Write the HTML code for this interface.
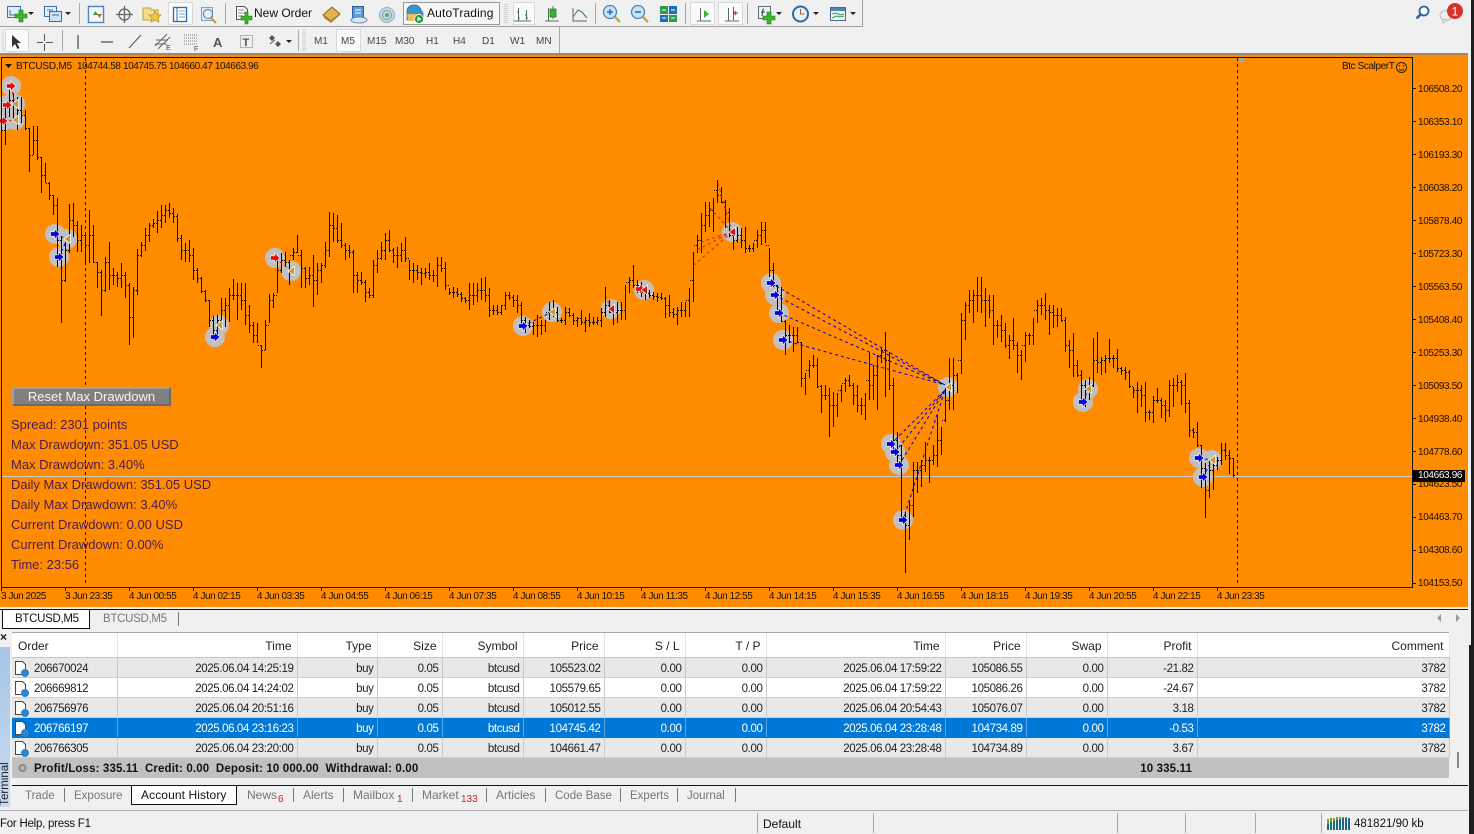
<!DOCTYPE html>
<html><head><meta charset="utf-8"><title>MetaTrader</title>
<style>
html,body{margin:0;padding:0;width:1474px;height:834px;overflow:hidden;background:#f0f0f0;font-family:"Liberation Sans",sans-serif;color:#111}
.a{position:absolute}
.t{position:absolute;white-space:nowrap;line-height:14px}
#tb{position:absolute;left:12px;top:633px;width:1437px;border-collapse:collapse;table-layout:fixed;font-size:11.5px;color:#222}
#tb td,#tb th{height:17px;padding:2px 3px 0 0;text-align:right;font-weight:normal;border-right:1px solid #c9c9c9;border-bottom:1px solid #cfcfcf;white-space:nowrap;overflow:hidden;letter-spacing:-.38px}
#tb th{height:23px;padding-top:1px;background:#fff;border-right:1px solid #e6e6e6;border-bottom:1px solid #c4c4c4;font-size:12px;padding-right:5px;letter-spacing:0}
#tb tr.g td{background:#e8e8e8}
#tb tr.w td{background:#fff}
#tb tr.s td{background:#0078d7;color:#fff;border-right:1px solid #5aa5e4;border-bottom:1px solid #0078d7}
#tb tr.u td{background:#c0c0c0;border:0;font-weight:bold;color:#111;height:18px;letter-spacing:.14px}
.L{text-align:left!important}
.tab{position:absolute;top:788px;font-size:11.5px;color:#777;line-height:14px;white-space:nowrap}
.dv{position:absolute;top:788px;width:1px;height:14px;background:#777}
.sd{position:absolute;top:813px;width:1px;height:20px;background:#a8a8a8}
.m{position:absolute;top:36px;font-size:10px;line-height:12px;color:#444;white-space:nowrap}
.sep{position:absolute;width:1px;background:#a8a8a8}
.act{position:absolute;background:#fafafa;border:1px solid #d8d8d8;box-sizing:border-box}
.p{position:absolute;left:1418px;font-size:10px;line-height:12px;color:#1a0f00;letter-spacing:-.35px}
.d{position:absolute;top:591px;font-size:10px;line-height:12px;color:#1a0f00;white-space:nowrap;letter-spacing:-.45px}
.i{position:absolute;left:11px;font-size:13px;line-height:16px;color:#4a1c50;white-space:nowrap}
</style></head><body>

<!-- toolbar row lines -->
<div class="a" style="left:0;top:26px;width:862px;height:1px;background:#a0a0a0"></div>
<div class="a" style="left:862px;top:0;width:1px;height:27px;background:#a0a0a0"></div>
<div class="a" style="left:559px;top:27px;width:1px;height:26px;background:#a8a8a8"></div>
<div class="a" style="left:0;top:53px;width:1468px;height:2px;background:#a08a64"></div>

<div class="act" style="left:168px;top:2px;width:25px;height:23px"></div>
<div class="act" style="left:513px;top:2px;width:22px;height:23px"></div>
<div class="act" style="left:690px;top:2px;width:25px;height:23px"></div>
<div class="act" style="left:718px;top:2px;width:25px;height:23px"></div>
<div class="act" style="left:403px;top:2px;width:97px;height:23px;border-color:#999;background:#f6f6f6"></div>
<div class="act" style="left:5px;top:29px;width:24px;height:23px"></div>
<div class="act" style="left:336px;top:29px;width:25px;height:23px"></div>
<div class="sep" style="left:79px;top:3px;height:21px"></div>
<div class="sep" style="left:225px;top:3px;height:21px"></div>
<div class="sep" style="left:595px;top:3px;height:21px"></div>
<div class="sep" style="left:685px;top:3px;height:21px"></div>
<div class="sep" style="left:747px;top:3px;height:21px"></div>
<div class="sep" style="left:62px;top:30px;height:21px"></div>
<div class="sep" style="left:298px;top:30px;height:21px"></div>

<svg class="a" style="left:0;top:0" width="900" height="54" viewBox="0 0 900 54">
<defs><path id="ar" d="M0 0h6l-3 3z" fill="#222"/></defs>
<!-- grips -->
<path d="M505 4v20M507 4v20M303 30v21M305 30v21M3 30v21" stroke="#b5b5b5" stroke-dasharray="1 1"/>
<!-- new chart -->
<rect x="7.500" y="6.500" width="13" height="11" fill="#dfeefa" stroke="#3d6f9e"/>
<path d="M10 10v5h5" stroke="#3d6f9e" fill="none"/>
<path d="M15 14h4v-4h4v4h4v4h-4v4h-4v-4h-4z" fill="#3cb52b" stroke="#1d7a14" stroke-width=".6"/>
<use href="#ar" x="28" y="12"/>
<!-- profiles -->
<rect x="44.500" y="6.500" width="12" height="10" fill="#e6f0fa" stroke="#3d6f9e"/>
<rect x="49.500" y="11.500" width="12" height="10" fill="#cfe2f5" stroke="#3d6f9e"/>
<path d="M47 10h6M52 15h7" stroke="#3d6f9e"/>
<use href="#ar" x="65" y="12"/>
<!-- market watch -->
<rect x="88.500" y="6.500" width="15" height="16" fill="#f4f8fc" stroke="#4a86b8" stroke-width="1.400"/>
<path d="M93 15l2.500-4 2.500 4z" fill="#2da52a"/><path d="M97 14l2.500 4 2.500-4z" fill="#d2552a"/>
<!-- crosshair -->
<circle cx="124.500" cy="14.500" r="5.500" fill="none" stroke="#666" stroke-width="1.300"/>
<path d="M124.500 6v17M116 14.500h17" stroke="#666" stroke-width="1.300"/>
<!-- folder star -->
<path d="M143 8h7l2 2h6v10h-15z" fill="#f7dc8e" stroke="#c49a3a"/>
<path d="M155 11l2 4h4l-3 3 1 4-4-2-4 2 1-4-3-3h4z" fill="#f5c838" stroke="#b58a20" stroke-width=".7"/>
<!-- navigator -->
<rect x="173.500" y="7.500" width="13" height="14" fill="#fff" stroke="#2a6aa8" stroke-width="1.300"/>
<path d="M177 8v13" stroke="#2a6aa8"/><path d="M179 11h6M179 14h6M179 17h6" stroke="#7aa8d0"/>
<!-- terminal search -->
<rect x="201.500" y="7.500" width="11" height="13" fill="#dfe8f0" stroke="#8aa0b4"/>
<circle cx="208" cy="14" r="4.500" fill="#e8f0f8" stroke="#5b7a96"/>
<path d="M211 18l5 5" stroke="#c49a3a" stroke-width="2"/>
<!-- new order -->
<path d="M236.500 6.500h8l3 3v10h-11z" fill="#fff" stroke="#555"/>
<path d="M238 10h6M238 13h7M238 16h5" stroke="#888"/>
<path d="M241 16h4v-4h3v4h4v4h-4v4h-3v-4h-4z" fill="#3cb52b" stroke="#1d7a14" stroke-width=".6"/>
<!-- gold book -->
<path d="M323 15l9-8 8 7-9 7z" fill="#e0b44e" stroke="#8a6320"/><path d="M323 15l1 3 7 5 9-8v-1l-9 7z" fill="#b8853a"/>
<!-- people cloud -->
<rect x="352.500" y="6.500" width="11" height="11" fill="#5b9bd8" stroke="#2a5e96"/>
<path d="M355 10h6M355 13h6" stroke="#fff"/>
<ellipse cx="359" cy="20" rx="8" ry="3" fill="#dbe8f3" stroke="#6a8eb0"/>
<!-- signal -->
<circle cx="387" cy="15" r="7.500" fill="#c8d6e0" stroke="#9ab"/>
<circle cx="387" cy="15" r="4.500" fill="none" stroke="#6aa3c4"/>
<circle cx="387" cy="15" r="2" fill="#58ad56"/>
<!-- autotrading -->
<path d="M407 12a7 6 0 0 1 14-2l2 3v7h-16z" fill="#3d93c9" stroke="#1f6a9a" stroke-width=".7"/>
<path d="M407 14h14l-1 7h-12z" fill="#e8c35a"/>
<circle cx="419" cy="19" r="4.500" fill="#1e9c3c" stroke="#fff" stroke-width=".7"/>
<path d="M417.500 16.500l4 2.500-4 2.500z" fill="#fff"/>
<!-- chart types -->
<path d="M514 21h17" stroke="#5a6a5a"/><path d="M518.500 8v13M517 12h1M519 18h1M526.500 10v10M525 15h1M527 18h1" stroke="#3a7a5a" stroke-width="1.100" fill="none"/>
<path d="M545 21h14M548.500 8v13M553 6v13" stroke="#5a6a5a"/><rect x="550" y="9" width="6" height="8" fill="#37b23a" stroke="#1d7a14" stroke-width=".7"/>
<path d="M573 8v13h14" stroke="#5a6a5a" fill="none"/><path d="M573 17l5-7 4 2 5 6" stroke="#3a7a5a" fill="none"/>
<!-- zoom -->
<circle cx="610" cy="12" r="6.500" fill="#c9e4f7" stroke="#4a86b8" stroke-width="1.300"/><path d="M607 12h6M610 9v6" stroke="#2a6aa8" stroke-width="1.500"/><path d="M615 17l5 5" stroke="#c9a43e" stroke-width="2.400"/>
<circle cx="638" cy="12" r="6.500" fill="#c9e4f7" stroke="#4a86b8" stroke-width="1.300"/><path d="M635 12h6" stroke="#2a6aa8" stroke-width="1.500"/><path d="M643 17l5 5" stroke="#c9a43e" stroke-width="2.400"/>
<!-- tile -->
<rect x="660" y="6" width="8" height="8" fill="#2d9b47"/><rect x="669" y="6" width="8" height="8" fill="#1f6fb5"/><rect x="660" y="15" width="8" height="7" fill="#1f6fb5"/><rect x="669" y="15" width="8" height="7" fill="#2d9b47"/>
<path d="M662 10h4M671 10h4M662 18h4M671 18h4" stroke="#fff"/>
<!-- shift / autoscroll -->
<path d="M697 21h14M700.500 8v13" stroke="#5a6a5a"/><path d="M704 10l5 4-5 4z" fill="#37b23a"/>
<path d="M725 21h14M728.500 8v13M733.500 7v13" stroke="#5a6a5a"/><path d="M735 13h3M736 11l-2 2 2 2" stroke="#c03020" fill="none"/>
<!-- indicators -->
<rect x="758.500" y="6.500" width="12" height="12" fill="#eef3f8" stroke="#5a6a7a"/><path d="M764 9c-2 0-1 3-2 7M761 12h4" stroke="#333" fill="none"/>
<path d="M763 16h4v-4h4v4h4v4h-4v4h-4v-4h-4z" fill="#3cb52b" stroke="#1d7a14" stroke-width=".6"/>
<use href="#ar" x="776" y="12"/>
<!-- clock -->
<circle cx="800.500" cy="14" r="7.500" fill="#e8f0f8" stroke="#2a6aa8" stroke-width="2"/><path d="M800.500 9v5h4" stroke="#a06030" fill="none"/>
<use href="#ar" x="813" y="12"/>
<!-- templates -->
<rect x="830.500" y="7.500" width="15" height="13" fill="#eef3f8" stroke="#4a6a8a"/><rect x="831" y="8" width="14" height="3" fill="#4a86b8"/>
<path d="M832 14l4-1 4 2 4-1M832 18l4-2 4 1 4-1" stroke="#3a9a4a" fill="none"/>
<use href="#ar" x="850" y="12"/>
<!-- row 2 -->
<path d="M12 35l0 12 3-3 2.500 5 2-1-2.500-5h4z" fill="#333"/>
<path d="M44.500 34v7M44.500 44v7M37 42.500h6M46 42.500h7" stroke="#555"/>
<path d="M78 35v14" stroke="#555" stroke-width="1.300"/>
<path d="M101 42h12" stroke="#555" stroke-width="1.300"/>
<path d="M129 48l12-13" stroke="#666" stroke-width="1.200"/>
<path d="M155 46l12-12M158 49l12-12M156 40h12M155 44h12" stroke="#666"/><text x="166" y="50" font-size="7" font-family="Liberation Sans" fill="#444">E</text>
<path d="M184 35h14M184 38h14M184 41h14M184 44h14" stroke="#777" stroke-dasharray="1 1"/><text x="194" y="51" font-size="7" font-family="Liberation Sans" fill="#444">F</text>
<text x="213" y="47" font-size="13" font-weight="bold" font-family="Liberation Sans" fill="#555">A</text>
<rect x="240.500" y="35.500" width="12" height="12" fill="none" stroke="#777" stroke-dasharray="1 1"/><text x="242.500" y="46" font-size="11" font-weight="bold" font-family="Liberation Sans" fill="#555">T</text>
<path d="M269 38l3-3 3 3-3 3zM275 44l3-3 3 3-3 3z" fill="#555"/><path d="M270 44l5-4" stroke="#555"/>
<use href="#ar" x="286" y="40"/>
</svg>
<div class="t" style="left:254px;top:6px;font-size:12px;color:#111">New Order</div>
<div class="t" style="left:427px;top:6px;font-size:12px;color:#111;letter-spacing:.15px">AutoTrading</div>
<div class="m" style="left:314px">M1</div><div class="m" style="left:341px">M5</div><div class="m" style="left:367px">M15</div><div class="m" style="left:395px">M30</div><div class="m" style="left:426px">H1</div><div class="m" style="left:453px">H4</div><div class="m" style="left:482px">D1</div><div class="m" style="left:510px">W1</div><div class="m" style="left:536px">MN</div>

<!-- top right -->
<svg class="a" style="left:1410px;top:0" width="60" height="28" viewBox="0 0 60 28">
<circle cx="14" cy="11" r="4.500" fill="#fff" stroke="#2d62ad" stroke-width="1.800"/><path d="M10.500 14.500l-4 4" stroke="#2d62ad" stroke-width="2.600"/>
<ellipse cx="36" cy="15.500" rx="6" ry="5" fill="#eee" stroke="#bbb"/><path d="M32 19l1 4 4-3z" fill="#eee" stroke="#bbb"/>
<circle cx="45" cy="11" r="8" fill="#d5322c"/>
<text x="45" y="15.500" font-size="12" text-anchor="middle" font-family="Liberation Sans" fill="#fff">1</text>
</svg>

<!-- chart -->
<div class="a" style="left:0;top:55px;width:1468px;height:552px;background:#ff8c00"></div>
<svg class="a" style="left:0;top:55px" width="1468" height="552" viewBox="0 55 1468 552">
<g fill="#c0c0c0">
<circle cx="11" cy="86" r="10"/><circle cx="7" cy="105" r="10"/><circle cx="15" cy="104" r="10"/><circle cx="3" cy="121" r="10"/><circle cx="15" cy="120" r="10"/>
<circle cx="55" cy="234" r="10"/><circle cx="67" cy="239" r="10"/><circle cx="59" cy="257" r="10"/>
<circle cx="275" cy="258" r="10"/><circle cx="291" cy="271" r="10"/><circle cx="219" cy="325" r="10"/><circle cx="215" cy="337" r="10"/>
<circle cx="523" cy="326" r="10"/><circle cx="552" cy="312" r="10"/><circle cx="611" cy="309" r="10"/><circle cx="644" cy="290" r="10"/>
<circle cx="732" cy="232" r="10"/><circle cx="771" cy="283" r="10"/><circle cx="775" cy="295" r="10"/><circle cx="779" cy="313" r="10"/><circle cx="783" cy="340" r="10"/>
<circle cx="948" cy="387" r="10"/><circle cx="891" cy="444" r="10"/><circle cx="895" cy="452" r="10"/><circle cx="899" cy="465" r="10"/><circle cx="903" cy="520" r="10"/>
<circle cx="1088" cy="389" r="10"/><circle cx="1083" cy="402" r="10"/><circle cx="1199" cy="458" r="10"/><circle cx="1212" cy="460" r="10"/><circle cx="1203" cy="477" r="10"/>
</g>
<path d="M1 476.500H1412" stroke="#c8c8c8"/>
<path d="M85.500 58V586M1237.500 58V586" stroke="#1a1000" stroke-dasharray="3 3"/>
<g transform="translate(.5 0)" stroke="#000" fill="none" shape-rendering="crispEdges">
<path d="M1 105V162M5 103V145M9 90V117M13 93V120M17 97V130M21 97V123M25 110V130M29 128V172M33 126V155M37 126V160M41 157V193M45 163V183M49 182V200M53 195V215M57 198V267M61 237V323M65 242V282M69 204V253M73 203V237M77 221V252M81 225V252M85 235V263M89 210V263M93 225V263M97 262V288M101 270V316M105 257V292M109 242V290M113 268V285M117 272V287M121 263V288M125 272V298M129 283V345M133 287V338M137 249V295M141 242V257M145 228V251M149 223V242M153 219V228M157 211V233M161 205V228M165 205V223M169 203V218M173 208V223M177 214V242M181 235V260M185 243V262M189 240V262M193 248V280M197 268V283M201 277V293M205 290V302M209 300V327M213 316V340M217 315V335M221 298V327M225 298V327M229 288V322M233 279V300M237 283V320M241 283V310M245 283V325M249 305V333M253 322V343M257 323V343M261 345V368M265 320V350M269 294V323M273 293V308M277 260V293M281 253V273M285 252V267M289 260V285M293 248V260M297 235V253M301 250V288M305 267V288M309 267V285M313 255V307M317 263V295M321 263V283M325 242V268M329 212V257M333 213V242M337 215V243M341 223V248M345 243V260M349 245V258M353 250V293M357 272V293M361 272V285M365 280V302M369 288V298M373 260V298M377 250V273M381 242V260M385 233V260M389 230V252M393 248V263M397 247V268M401 243V262M405 237V262M409 260V280M413 263V283M417 265V280M421 268V285M425 268V278M429 263V280M433 270V282M437 257V287M441 257V272M445 262V290M449 288V295M453 287V298M457 288V297M461 292V302M465 297V303M469 283V310M473 283V305M477 283V302M481 278V300M485 277V302M489 288V317M493 305V315M497 305V315M501 305V315M505 292V310M509 292V300M513 295V307M517 295V313M521 302V325M525 317V333M529 320V328M533 322V335M537 315V337M541 320V335M545 320V332M549 302V320M553 300V317M557 307V322M561 318V323M565 307V325M569 308V317M573 313V325M577 317V327M581 310V325M585 317V332M589 313V327M593 317V325M597 317V325M601 308V327M605 287V317M609 300V313M613 310V325M617 302V323M621 302V320M625 285V320M629 277V293M633 265V288M637 280V293M641 282V297M645 287V300M649 290V298M653 292V300M657 293V302M661 293V300M665 297V318M669 295V317M673 308V318M677 307V325M681 302V317M685 302V317M689 288V317M693 252V302M697 235V253M701 213V253M705 202V232M709 202V227M713 198V232M717 180V203M721 187V203M725 200V228M729 208V237M733 233V250M737 227V243M741 228V248M745 227V253M749 245V252M753 243V252M757 230V248M761 222V245M765 222V243M769 248V277M773 263V287M777 285V310M781 287V322M785 320V355M789 325V343M793 327V352M797 327V343M801 342V387M805 373V395M809 360V378M813 355V368M817 358V388M821 385V413M825 385V400M829 388V437M833 392V427M837 393V417M841 385V402M845 378V392M849 375V387M853 383V405M857 385V412M861 398V415M865 393V420M869 352V400M873 365V400M877 355V410M881 348V363M885 332V397M889 352V390M893 378V450M897 432V463M901 445V520M905 513V573M909 500V540M913 462V517M917 462V493M921 460V487M925 442V472M929 457V483M933 445V465M937 415V467M941 427V455M945 387V422M949 358V410M953 358V410M957 373V393M961 313V374M965 302V340M969 290V313M973 290V323M977 277V312M981 277V313M985 288V327M989 295V318M993 295V345M997 320V338M1001 315V342M1005 323V348M1009 335V359M1013 318V350M1017 342V373M1021 350V380M1025 332V362M1029 333V345M1033 318V345M1037 300V323M1041 298V315M1045 293V320M1049 305V335M1053 305V328M1057 308V327M1061 308V322M1065 317V352M1069 340V368M1073 333V377M1077 360V377M1081 370V403M1085 380V407M1089 377V400M1093 338V387M1097 332V373M1101 357V375M1105 355V373M1109 339V363M1113 355V368M1117 349V372M1121 367V375M1125 367V380M1129 370V388M1133 387V398M1137 382V413M1141 385V407M1145 382V422M1149 410V420M1153 396V423M1157 388V403M1161 398V418M1165 400V422M1169 380V417M1173 378V407M1177 375V392M1181 380V405M1185 373V413M1189 400V437M1193 428V438M1197 422V447M1201 445V488M1205 463V518M1209 460V498M1213 458V490M1217 457V470M1221 443V465M1225 443V460M1229 450V474M1233 458V477"/>
</g>
<g transform="translate(0 .5)" stroke="#000" fill="none" stroke-dasharray="1 1" shape-rendering="crispEdges">
<path d="M2 130h3M6 105h3M10 100h3M14 105h3M18 110h3M22 115h3M26 128h3M30 155h3M34 140h3M38 157h3M42 175h3M46 183h3M50 195h3M54 205h3M58 240h3M62 280h3M66 250h3M70 220h3M74 225h3M78 240h3M82 235h3M86 245h3M90 235h3M94 262h3M98 272h3M102 290h3M106 262h3M110 275h3M114 275h3M118 278h3M122 275h3M126 285h3M130 317h3M134 290h3M138 255h3M142 245h3M146 235h3M150 225h3M154 223h3M158 220h3M162 215h3M166 210h3M170 213h3M174 216h3M178 238h3M182 250h3M186 250h3M190 255h3M194 270h3M198 278h3M202 291h3M206 300h3M210 320h3M214 330h3M218 320h3M222 310h3M226 305h3M230 295h3M234 295h3M238 295h3M242 300h3M246 315h3M250 325h3M254 335h3M258 345h3M262 350h3M266 325h3M270 300h3M274 295h3M278 270h3M282 260h3M286 262h3M290 255h3M294 252h3M298 255h3M302 268h3M306 278h3M310 275h3M314 280h3M318 270h3M322 265h3M326 250h3M330 225h3M334 228h3M338 240h3M342 245h3M346 250h3M350 252h3M354 275h3M358 280h3M362 282h3M366 292h3M370 295h3M374 265h3M378 258h3M382 250h3M386 240h3M390 250h3M394 255h3M398 255h3M402 250h3M406 258h3M410 270h3M414 270h3M418 272h3M422 273h3M426 272h3M430 275h3M434 275h3M438 265h3M442 268h3M446 285h3M450 292h3M454 292h3M458 294h3M462 298h3M466 300h3M470 295h3M474 295h3M478 290h3M482 290h3M486 295h3M490 310h3M494 310h3M498 312h3M502 305h3M506 295h3M510 297h3M514 300h3M518 305h3M522 320h3M526 325h3M530 326h3M534 325h3M538 325h3M542 325h3M546 312h3M550 310h3M554 312h3M558 320h3M562 320h3M566 312h3M570 315h3M574 320h3M578 318h3M582 322h3M586 320h3M590 322h3M594 322h3M598 320h3M602 312h3M606 305h3M610 312h3M614 312h3M618 310h3M622 310h3M626 282h3M630 280h3M634 285h3M638 285h3M642 292h3M646 293h3M650 295h3M654 296h3M658 297h3M662 298h3M666 305h3M670 312h3M674 314h3M678 310h3M682 310h3M686 300h3M690 280h3M694 245h3M698 240h3M702 225h3M706 215h3M710 210h3M714 190h3M718 195h3M722 202h3M726 212h3M730 235h3M734 240h3M738 235h3M742 240h3M746 248h3M750 248h3M754 240h3M758 235h3M762 230h3M766 245h3M770 270h3M774 285h3M778 295h3M782 321h3M786 335h3M790 335h3M794 335h3M798 342h3M802 378h3M806 370h3M810 365h3M814 365h3M818 386h3M822 395h3M826 395h3M830 405h3M834 405h3M838 390h3M842 383h3M846 380h3M850 385h3M854 395h3M858 405h3M862 405h3M866 380h3M870 385h3M874 375h3M878 355h3M882 350h3M886 360h3M890 385h3M894 440h3M898 455h3M902 515h3M906 525h3M910 505h3M914 470h3M918 470h3M922 465h3M926 460h3M930 460h3M934 455h3M938 440h3M942 420h3M946 400h3M950 385h3M954 375h3M958 360h3M962 320h3M966 305h3M970 300h3M974 295h3M978 295h3M982 300h3M986 300h3M990 310h3M994 325h3M998 325h3M1002 330h3M1006 345h3M1010 340h3M1014 345h3M1018 355h3M1022 345h3M1026 335h3M1030 335h3M1034 310h3M1038 305h3M1042 305h3M1046 310h3M1050 312h3M1054 315h3M1058 315h3M1062 320h3M1066 345h3M1070 350h3M1074 365h3M1078 375h3M1082 385h3M1086 390h3M1090 385h3M1094 360h3M1098 362h3M1102 360h3M1106 358h3M1110 358h3M1114 358h3M1118 368h3M1122 370h3M1126 372h3M1130 386h3M1134 390h3M1138 390h3M1142 395h3M1146 412h3M1150 412h3M1154 400h3M1158 400h3M1162 405h3M1166 410h3M1170 385h3M1174 385h3M1178 382h3M1182 385h3M1186 403h3M1190 430h3M1194 432h3M1198 445h3M1202 468h3M1206 490h3M1210 470h3M1214 465h3M1218 460h3M1222 450h3M1226 455h3M1230 458h3M1234 475h1"/>
</g>
<g fill="none" stroke="#0000c0" stroke-width="1" stroke-dasharray="3 3">
<path d="M771 283L945 385M775 295L945 385M779 313L945 385M783 340L945 385M891 444L945 390M895 452L945 390M899 465L945 390M903 520L945 390"/>
<path d="M55 234L67 239M59 257L67 239M1083 402L1088 389M1199 458L1212 460M1203 477L1212 460M523 326L552 312M215 337L219 325"/>
</g>
<g fill="none" stroke="#e01818" stroke-width="1" stroke-dasharray="3 3">
<path d="M732 232L693 266M732 232L697 250M732 232L701 242M732 232L710 208M732 232L717 180M11 86L15 104M7 105L15 104M3 121L15 120M275 258L291 271M611 309L606 297M640 289L644 290"/>
</g>
<defs>
<path id="bA" d="M-4.500-2.200h4v-2.800L5 0-.5 5V2.200h-4z" fill="#0000e0" stroke="#fff" stroke-width=".6"/>
<path id="rA" d="M-4.500-2.200h4v-2.800L5 0-.5 5V2.200h-4z" fill="#e01010" stroke="#fff" stroke-width=".6"/>
<path id="tT" d="M3.500-4.800V4.800L-3 0z" fill="#c89a40" stroke="#fff" stroke-width=".7"/>
<path id="rT" d="M3.500-4.800V4.800L-3 0z" fill="#d01818" stroke="#fff" stroke-width=".7"/>
</defs>
<use href="#rA" x="11" y="86"/><use href="#rA" x="7" y="105"/><use href="#tT" x="15" y="104"/><use href="#rA" x="3" y="121"/><use href="#tT" x="15" y="120"/>
<use href="#bA" x="55" y="234"/><use href="#tT" x="67" y="239"/><use href="#bA" x="59" y="257"/>
<use href="#rA" x="275" y="258"/><use href="#tT" x="291" y="271"/><use href="#tT" x="219" y="325"/><use href="#bA" x="215" y="337"/>
<use href="#bA" x="523" y="326"/><use href="#tT" x="552" y="312"/><use href="#rT" x="611" y="309"/><use href="#rA" x="640" y="289"/><use href="#rT" x="644" y="290"/>
<use href="#rT" x="732" y="232"/><use href="#bA" x="771" y="283"/><use href="#bA" x="775" y="295"/><use href="#bA" x="779" y="313"/><use href="#bA" x="783" y="340"/>
<use href="#tT" x="948" y="387"/><use href="#bA" x="891" y="444"/><use href="#bA" x="895" y="452"/><use href="#bA" x="899" y="465"/><use href="#bA" x="903" y="520"/>
<use href="#tT" x="1088" y="389"/><use href="#bA" x="1083" y="402"/><use href="#bA" x="1199" y="458"/><use href="#tT" x="1212" y="460"/><use href="#bA" x="1203" y="477"/>
<!-- frame -->
<path d="M1.500 57.500H1412.500V587.500H1.500Z" fill="none" stroke="#111"/>
<path d="M1413 88.500h3M1413 121.500h3M1413 154.500h3M1413 187.500h3M1413 220.500h3M1413 253.500h3M1413 286.500h3M1413 319.500h3M1413 352.500h3M1413 385.500h3M1413 418.500h3M1413 451.500h3M1413 484.500h3M1413 517.500h3M1413 550.500h3M1413 583.500h3" stroke="#111"/>
<path d="M1.500 588v3M65.500 588v3M129.500 588v3M193.500 588v3M257.500 588v3M321.500 588v3M385.500 588v3M449.500 588v3M513.500 588v3M577.500 588v3M641.500 588v3M705.500 588v3M769.500 588v3M833.500 588v3M897.500 588v3M961.500 588v3M1025.500 588v3M1089.500 588v3M1153.500 588v3M1217.500 588v3" stroke="#111"/>
<path d="M5 64h7l-3.500 4z" fill="#111"/>
<path d="M1238 58h7l-3.500 5z" fill="#9ab0c0"/>
<circle cx="1401.500" cy="67.500" r="5" fill="none" stroke="#222"/><circle cx="1399.500" cy="66" r=".7" fill="#222"/><circle cx="1403.500" cy="66" r=".7" fill="#222"/><path d="M1399 69c1 1.500 4 1.500 5 0" stroke="#222" fill="none"/>
</svg>

<div class="t" style="left:16px;top:60px;font-size:10px;color:#111;letter-spacing:-.2px">BTCUSD,M5</div>
<div class="t" style="left:77px;top:60px;font-size:10px;color:#111;letter-spacing:-.41px">104744.58 104745.75 104660.47 104663.96</div>
<div class="t" style="left:1342px;top:60px;font-size:10px;color:#111;letter-spacing:-.4px">Btc ScalperT</div>

<div class="p" style="top:84px">106508.20</div><div class="p" style="top:117px">106353.10</div><div class="p" style="top:150px">106193.30</div><div class="p" style="top:183px">106038.20</div><div class="p" style="top:216px">105878.40</div><div class="p" style="top:249px">105723.30</div><div class="p" style="top:282px">105563.50</div><div class="p" style="top:315px">105408.40</div><div class="p" style="top:348px">105253.30</div><div class="p" style="top:381px">105093.50</div><div class="p" style="top:414px">104938.40</div><div class="p" style="top:447px">104778.60</div><div class="p" style="top:479px">104623.50</div><div class="p" style="top:512px">104463.70</div><div class="p" style="top:545px">104308.60</div><div class="p" style="top:578px">104153.50</div>
<div class="a" style="left:1413px;top:470px;width:52px;height:12px;background:#000"></div>
<div class="p" style="top:470px;color:#fff">104663.96</div>

<div class="d" style="left:1px">3 Jun 2025</div><div class="d" style="left:65px">3 Jun 23:35</div><div class="d" style="left:129px">4 Jun 00:55</div><div class="d" style="left:193px">4 Jun 02:15</div><div class="d" style="left:257px">4 Jun 03:35</div><div class="d" style="left:321px">4 Jun 04:55</div><div class="d" style="left:385px">4 Jun 06:15</div><div class="d" style="left:449px">4 Jun 07:35</div><div class="d" style="left:513px">4 Jun 08:55</div><div class="d" style="left:577px">4 Jun 10:15</div><div class="d" style="left:641px">4 Jun 11:35</div><div class="d" style="left:705px">4 Jun 12:55</div><div class="d" style="left:769px">4 Jun 14:15</div><div class="d" style="left:833px">4 Jun 15:35</div><div class="d" style="left:897px">4 Jun 16:55</div><div class="d" style="left:961px">4 Jun 18:15</div><div class="d" style="left:1025px">4 Jun 19:35</div><div class="d" style="left:1089px">4 Jun 20:55</div><div class="d" style="left:1153px">4 Jun 22:15</div><div class="d" style="left:1217px">4 Jun 23:35</div>

<div class="a" style="left:12px;top:387px;width:159px;height:19px;box-sizing:border-box;background:#808080;border:2px solid;border-color:#a0a0a0 #6a6a6a #6a6a6a #a0a0a0;color:#f4f4f4;font-size:13px;line-height:15px;text-align:center">Reset Max Drawdown</div>
<div class="i" style="top:417px">Spread: 2301 points</div>
<div class="i" style="top:437px">Max Drawdown: 351.05 USD</div>
<div class="i" style="top:457px">Max Drawdown: 3.40%</div>
<div class="i" style="top:477px">Daily Max Drawdown: 351.05 USD</div>
<div class="i" style="top:497px">Daily Max Drawdown: 3.40%</div>
<div class="i" style="top:517px">Current Drawdown: 0.00 USD</div>
<div class="i" style="top:537px">Current Drawdown: 0.00%</div>
<div class="i" style="top:557px">Time: 23:56</div>

<!-- chart tabs -->
<div class="a" style="left:0;top:607px;width:1468px;height:2px;background:#f0f0f0"></div>
<div class="a" style="left:0;top:609px;width:1468px;height:1px;background:#111"></div>
<div class="a" style="left:2px;top:609px;width:88px;height:20px;box-sizing:border-box;background:#fff;border:1px solid #111;border-top:1px solid #111"></div>
<div class="t" style="left:15px;top:612px;font-size:11.5px;color:#111;letter-spacing:-.3px">BTCUSD,M5</div>
<div class="t" style="left:103px;top:612px;font-size:11.5px;color:#777;letter-spacing:-.3px">BTCUSD,M5</div>
<div class="a" style="left:178px;top:612px;width:1px;height:14px;background:#777"></div>
<svg class="a" style="left:1434px;top:613px" width="30" height="10" viewBox="0 0 30 10"><path d="M7 1v8L3 5zM22 1v8l4-4z" fill="#9a9a9a"/></svg>

<!-- terminal left -->
<div class="t" style="left:0;top:631px;font-size:12px;font-weight:bold;color:#111;line-height:12px">×</div>
<div class="a" style="left:0;top:647px;width:10px;height:160px;background:linear-gradient(180deg,#a6c4e6,#c8dbf0)"></div>
<div class="t" style="left:-18px;top:777px;font-size:11.5px;color:#222;transform:rotate(-90deg);width:46px;text-align:center">Terminal</div>

<!-- table -->
<div class="a" style="left:12px;top:632px;width:1437px;height:1px;background:#a8a8a8"></div>
<table id="tb"><colgroup><col style="width:105px"><col style="width:180px"><col style="width:80px"><col style="width:65px"><col style="width:81px"><col style="width:81px"><col style="width:81px"><col style="width:81px"><col style="width:179px"><col style="width:81px"><col style="width:81px"><col style="width:90px"><col style="width:252px"></colgroup>
<tr><th class="L" style="padding-left:6px">Order</th><th>Time</th><th>Type</th><th>Size</th><th>Symbol</th><th>Price</th><th>S / L</th><th>T / P</th><th>Time</th><th>Price</th><th>Swap</th><th>Profit</th><th>Comment</th></tr>
<tr class="g"><td class="L" style="padding-left:22px">206670024</td><td>2025.06.04 14:25:19</td><td>buy</td><td>0.05</td><td>btcusd</td><td>105523.02</td><td>0.00</td><td>0.00</td><td>2025.06.04 17:59:22</td><td>105086.55</td><td>0.00</td><td>-21.82</td><td>3782</td></tr>
<tr class="w"><td class="L" style="padding-left:22px">206669812</td><td>2025.06.04 14:24:02</td><td>buy</td><td>0.05</td><td>btcusd</td><td>105579.65</td><td>0.00</td><td>0.00</td><td>2025.06.04 17:59:22</td><td>105086.26</td><td>0.00</td><td>-24.67</td><td>3782</td></tr>
<tr class="g"><td class="L" style="padding-left:22px">206756976</td><td>2025.06.04 20:51:16</td><td>buy</td><td>0.05</td><td>btcusd</td><td>105012.55</td><td>0.00</td><td>0.00</td><td>2025.06.04 20:54:43</td><td>105076.07</td><td>0.00</td><td>3.18</td><td>3782</td></tr>
<tr class="s"><td class="L" style="padding-left:22px">206766197</td><td>2025.06.04 23:16:23</td><td>buy</td><td>0.05</td><td>btcusd</td><td>104745.42</td><td>0.00</td><td>0.00</td><td>2025.06.04 23:28:48</td><td>104734.89</td><td>0.00</td><td>-0.53</td><td>3782</td></tr>
<tr class="g"><td class="L" style="padding-left:22px">206766305</td><td>2025.06.04 23:20:00</td><td>buy</td><td>0.05</td><td>btcusd</td><td>104661.47</td><td>0.00</td><td>0.00</td><td>2025.06.04 23:28:48</td><td>104734.89</td><td>0.00</td><td>3.67</td><td>3782</td></tr>
<tr class="u"><td colspan="11" class="L" style="padding-left:22px">Profit/Loss: 335.11&nbsp; Credit: 0.00&nbsp; Deposit: 10 000.00&nbsp; Withdrawal: 0.00</td><td style="padding-right:5px">10 335.11</td><td></td></tr>
</table>
<svg class="a" style="left:12px;top:658px" width="20" height="120" viewBox="0 0 20 120">
<defs><g id="dc"><path d="M3.500 3.500h7l3 3v10h-10z" fill="#fff" stroke="#444"/><circle cx="13" cy="15" r="4" fill="#2b86cf"/></g></defs>
<use href="#dc"/><use href="#dc" y="20"/><use href="#dc" y="40"/><use href="#dc" y="60"/><use href="#dc" y="80"/>
<circle cx="10.500" cy="110" r="3.500" fill="#9a9a9a" stroke="#808080"/><circle cx="10.500" cy="110" r="1.500" fill="#c0c0c0"/>
</svg>
<div class="a" style="left:1457px;top:752px;width:2px;height:16px;background:#8a8a8a"></div>

<!-- bottom tabs -->
<div class="a" style="left:12px;top:785px;width:1456px;height:1px;background:#111"></div>
<div class="a" style="left:131px;top:785px;width:106px;height:20px;box-sizing:border-box;background:#fff;border:1px solid #111;border-top:1px solid #111"></div>
<div class="tab" style="left:25px;top:789px">Trade</div><div class="dv" style="left:64px"></div>
<div class="tab" style="left:74px;top:789px">Exposure</div>
<div class="tab" style="left:141px;color:#111;font-size:12px;letter-spacing:.1px">Account History</div>
<div class="tab" style="left:247px;font-size:12px">News</div><div class="t" style="left:278px;top:793px;font-size:10px;color:#d02020">6</div><div class="dv" style="left:293px"></div>
<div class="tab" style="left:303px;font-size:12px">Alerts</div><div class="dv" style="left:343px"></div>
<div class="tab" style="left:353px;font-size:12px">Mailbox</div><div class="t" style="left:397px;top:793px;font-size:10px;color:#d02020">1</div><div class="dv" style="left:412px"></div>
<div class="tab" style="left:422px;font-size:12px">Market</div><div class="t" style="left:461px;top:793px;font-size:10px;color:#d02020">133</div><div class="dv" style="left:486px"></div>
<div class="tab" style="left:496px;font-size:12px">Articles</div><div class="dv" style="left:545px"></div>
<div class="tab" style="left:555px;top:789px">Code Base</div><div class="dv" style="left:620px"></div>
<div class="tab" style="left:630px;top:789px">Experts</div><div class="dv" style="left:677px"></div>
<div class="tab" style="left:687px;top:789px">Journal</div><div class="dv" style="left:735px"></div>

<!-- status -->
<div class="a" style="left:0;top:810px;width:1468px;height:1px;background:#b0b0b0"></div>
<div class="t" style="left:0;top:817px;font-size:11.5px;color:#111;letter-spacing:-.25px">For Help, press F1</div>
<div class="sd" style="left:757px"></div><div class="t" style="left:763px;top:817px;font-size:12px;color:#111">Default</div>
<div class="sd" style="left:873px"></div><div class="sd" style="left:1117px"></div><div class="sd" style="left:1185px"></div><div class="sd" style="left:1255px"></div><div class="sd" style="left:1321px"></div>
<svg class="a" style="left:1327px;top:816px" width="24" height="15" viewBox="0 0 24 15"><path d="M1 8v6M4 6v8M7 5v9M10 4v10M13 3v11M16 2v12M19 2v12M22 2v12" stroke="#1d6a80" stroke-width="2"/><path d="M1 3v5M4 2v4M7 2v3M10 1v3M13 1v2M16 1v1M19 1v1" stroke="#7fa020" stroke-width="2"/></svg>
<div class="t" style="left:1354px;top:817px;font-size:11.5px;color:#111">481821/90 kb</div>

<!-- right edge -->
<div class="a" style="left:1471px;top:0;width:3px;height:645px;background:#1e1e1e"></div>
<div class="a" style="left:1469px;top:645px;width:5px;height:189px;background:#1e1e1e"></div>
</body></html>
